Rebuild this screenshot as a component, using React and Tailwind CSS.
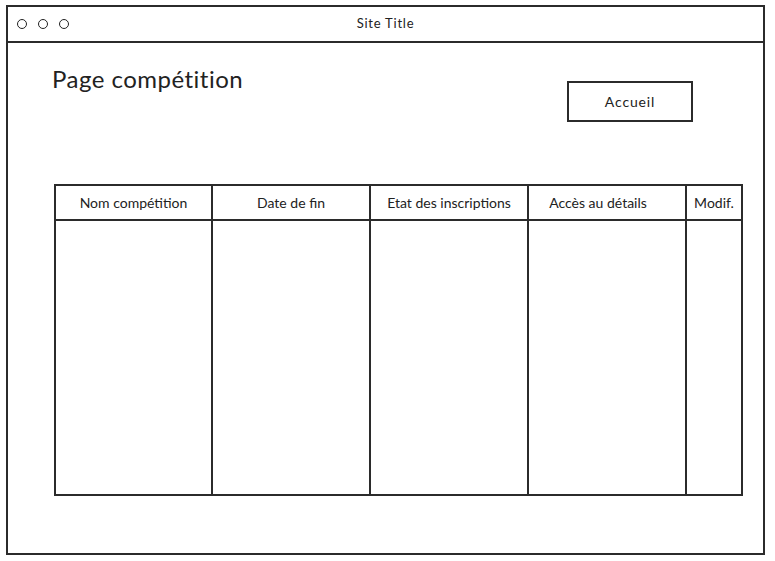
import React from 'react';

const columns = [
  { label: 'Nom compétition', width: 'w-[159px]' },
  { label: 'Date de fin', width: 'w-[158px]' },
  { label: 'Etat des inscriptions', width: 'w-[158px]' },
  { label: 'Accès au détails', width: 'w-[158px]', pad: 'pr-[18px]' },
  { label: 'Modif.', width: 'w-[56px]' },
];

export default function App() {
  return (
    <div className="w-[775px] h-[561px] bg-white pt-[5px] pl-[6px] font-['Lato','Noto_Sans',sans-serif] text-[#222]">
      {/* Browser window */}
      <div className="w-[759px] h-[550px] border-2 border-[#2b2b2b] flex flex-col">
        {/* Title bar */}
        <div className="h-[36px] border-b-2 border-[#2b2b2b] flex items-center relative">
          <div className="flex items-center gap-[11px] pl-[9px]">
            <span className="w-[10px] h-[10px] rounded-full border-[1.5px] border-[#222]" />
            <span className="w-[10px] h-[10px] rounded-full border-[1.5px] border-[#222]" />
            <span className="w-[10px] h-[10px] rounded-full border-[1.5px] border-[#222]" />
          </div>
          <div className="absolute left-0 right-0 text-center text-[13px] tracking-[0.06em] pointer-events-none">Site Title</div>
        </div>

        {/* Content */}
        <div className="flex-1 flex flex-col">
          <div className="flex justify-between items-start pl-[44px] pr-[70px]">
            <h1 className="mt-[21px] text-[24px] leading-[30px] font-normal tracking-[0.02em]">Page compétition</h1>
            <button className="mt-[38px] w-[126px] h-[41px] border-2 border-[#2b2b2b] text-[14px] tracking-[0.06em] bg-white">
              Accueil
            </button>
          </div>

          {/* Table */}
          <div className="ml-[46px] mt-[62px] flex">
            {columns.map((col, i) => (
              <div
                key={col.label}
                className={`${col.width} h-[312px] flex flex-col border-y-2 border-r-2 border-[#2b2b2b] ${i === 0 ? 'border-l-2' : ''}`}
              >
                <div className={`h-[35px] border-b-2 border-[#2b2b2b] flex items-center justify-center text-[14px] whitespace-nowrap ${col.pad || ''}`}>
                  {col.label}
                </div>
                <div className="flex-1" />
              </div>
            ))}
          </div>
        </div>
      </div>
    </div>
  );
}
